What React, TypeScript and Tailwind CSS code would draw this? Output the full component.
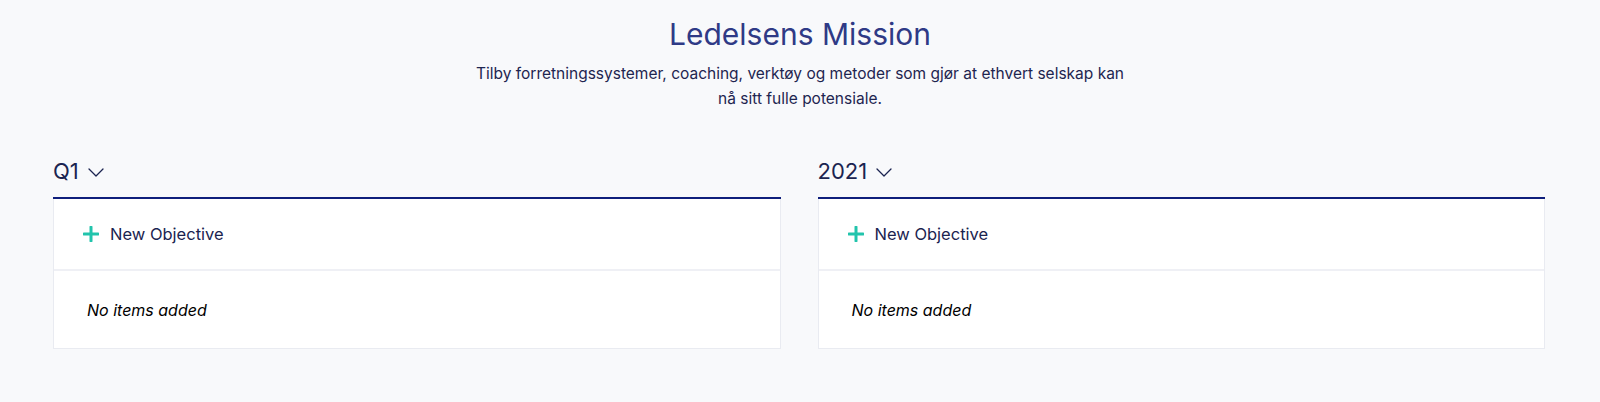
import React from 'react';

const columns = [{ label: 'Q1' }, { label: '2021' }];

const Chevron = () => (
  <svg width="16" height="9" viewBox="0 0 16 9" fill="none" className="mt-[3px]">
    <path d="M1 1l7 7 7-7" stroke="#1b2450" strokeWidth="1.3" strokeLinecap="round" strokeLinejoin="round" />
  </svg>
);

const PlusIcon = () => (
  <svg width="16" height="16" viewBox="0 0 16 16" fill="none">
    <path d="M8 1v14M1 8h14" stroke="#22c4ac" strokeWidth="3" strokeLinecap="round" />
  </svg>
);

const ObjectiveColumn: React.FC<{ label: string }> = ({ label }) => {
  return (
    <div className="flex flex-col">
      <button className="flex items-center gap-[9px] h-[64px] pt-[10px] border-b-2 border-[#0f1f7c] text-[22px] text-[#1b2450] leading-none">
        <span>{label}</span>
        <Chevron />
      </button>
      <div className="bg-white border-x border-b border-[#e9ebf1]">
        <button className="flex items-center w-full h-[72px] pl-[29px] gap-[11px] text-[16.5px] text-[#1b2450] border-b-2 border-[#eff0f5]">
          <PlusIcon />
          <span>New Objective</span>
        </button>
        <div className="flex items-center h-[77px] pl-[33px] text-[16px] italic text-black">
          No items added
        </div>
      </div>
    </div>
  );
};

export default function App() {
  return (
    <div className="min-h-screen bg-[#f8f9fb]" style={{ fontFamily: 'Inter, "Noto Sans", sans-serif' }}>
      <div className="pt-[14px] text-center">
        <h1 className="text-[30px] leading-[40px] text-[#2f3a86]">Ledelsens Mission</h1>
        <p className="mx-auto mt-[7px] max-w-[665px] text-[15.5px] leading-[25px] text-[#1e2550]">
          Tilby forretningssystemer, coaching, verktøy og metoder som gjør at ethvert selskap kan nå sitt fulle potensiale.
        </p>
      </div>
      <div className="grid grid-cols-2 gap-[37px] pl-[53px] pr-[55px] mt-[24px]">
        {columns.map((c) => (
          <ObjectiveColumn key={c.label} label={c.label} />
        ))}
      </div>
    </div>
  );
}
